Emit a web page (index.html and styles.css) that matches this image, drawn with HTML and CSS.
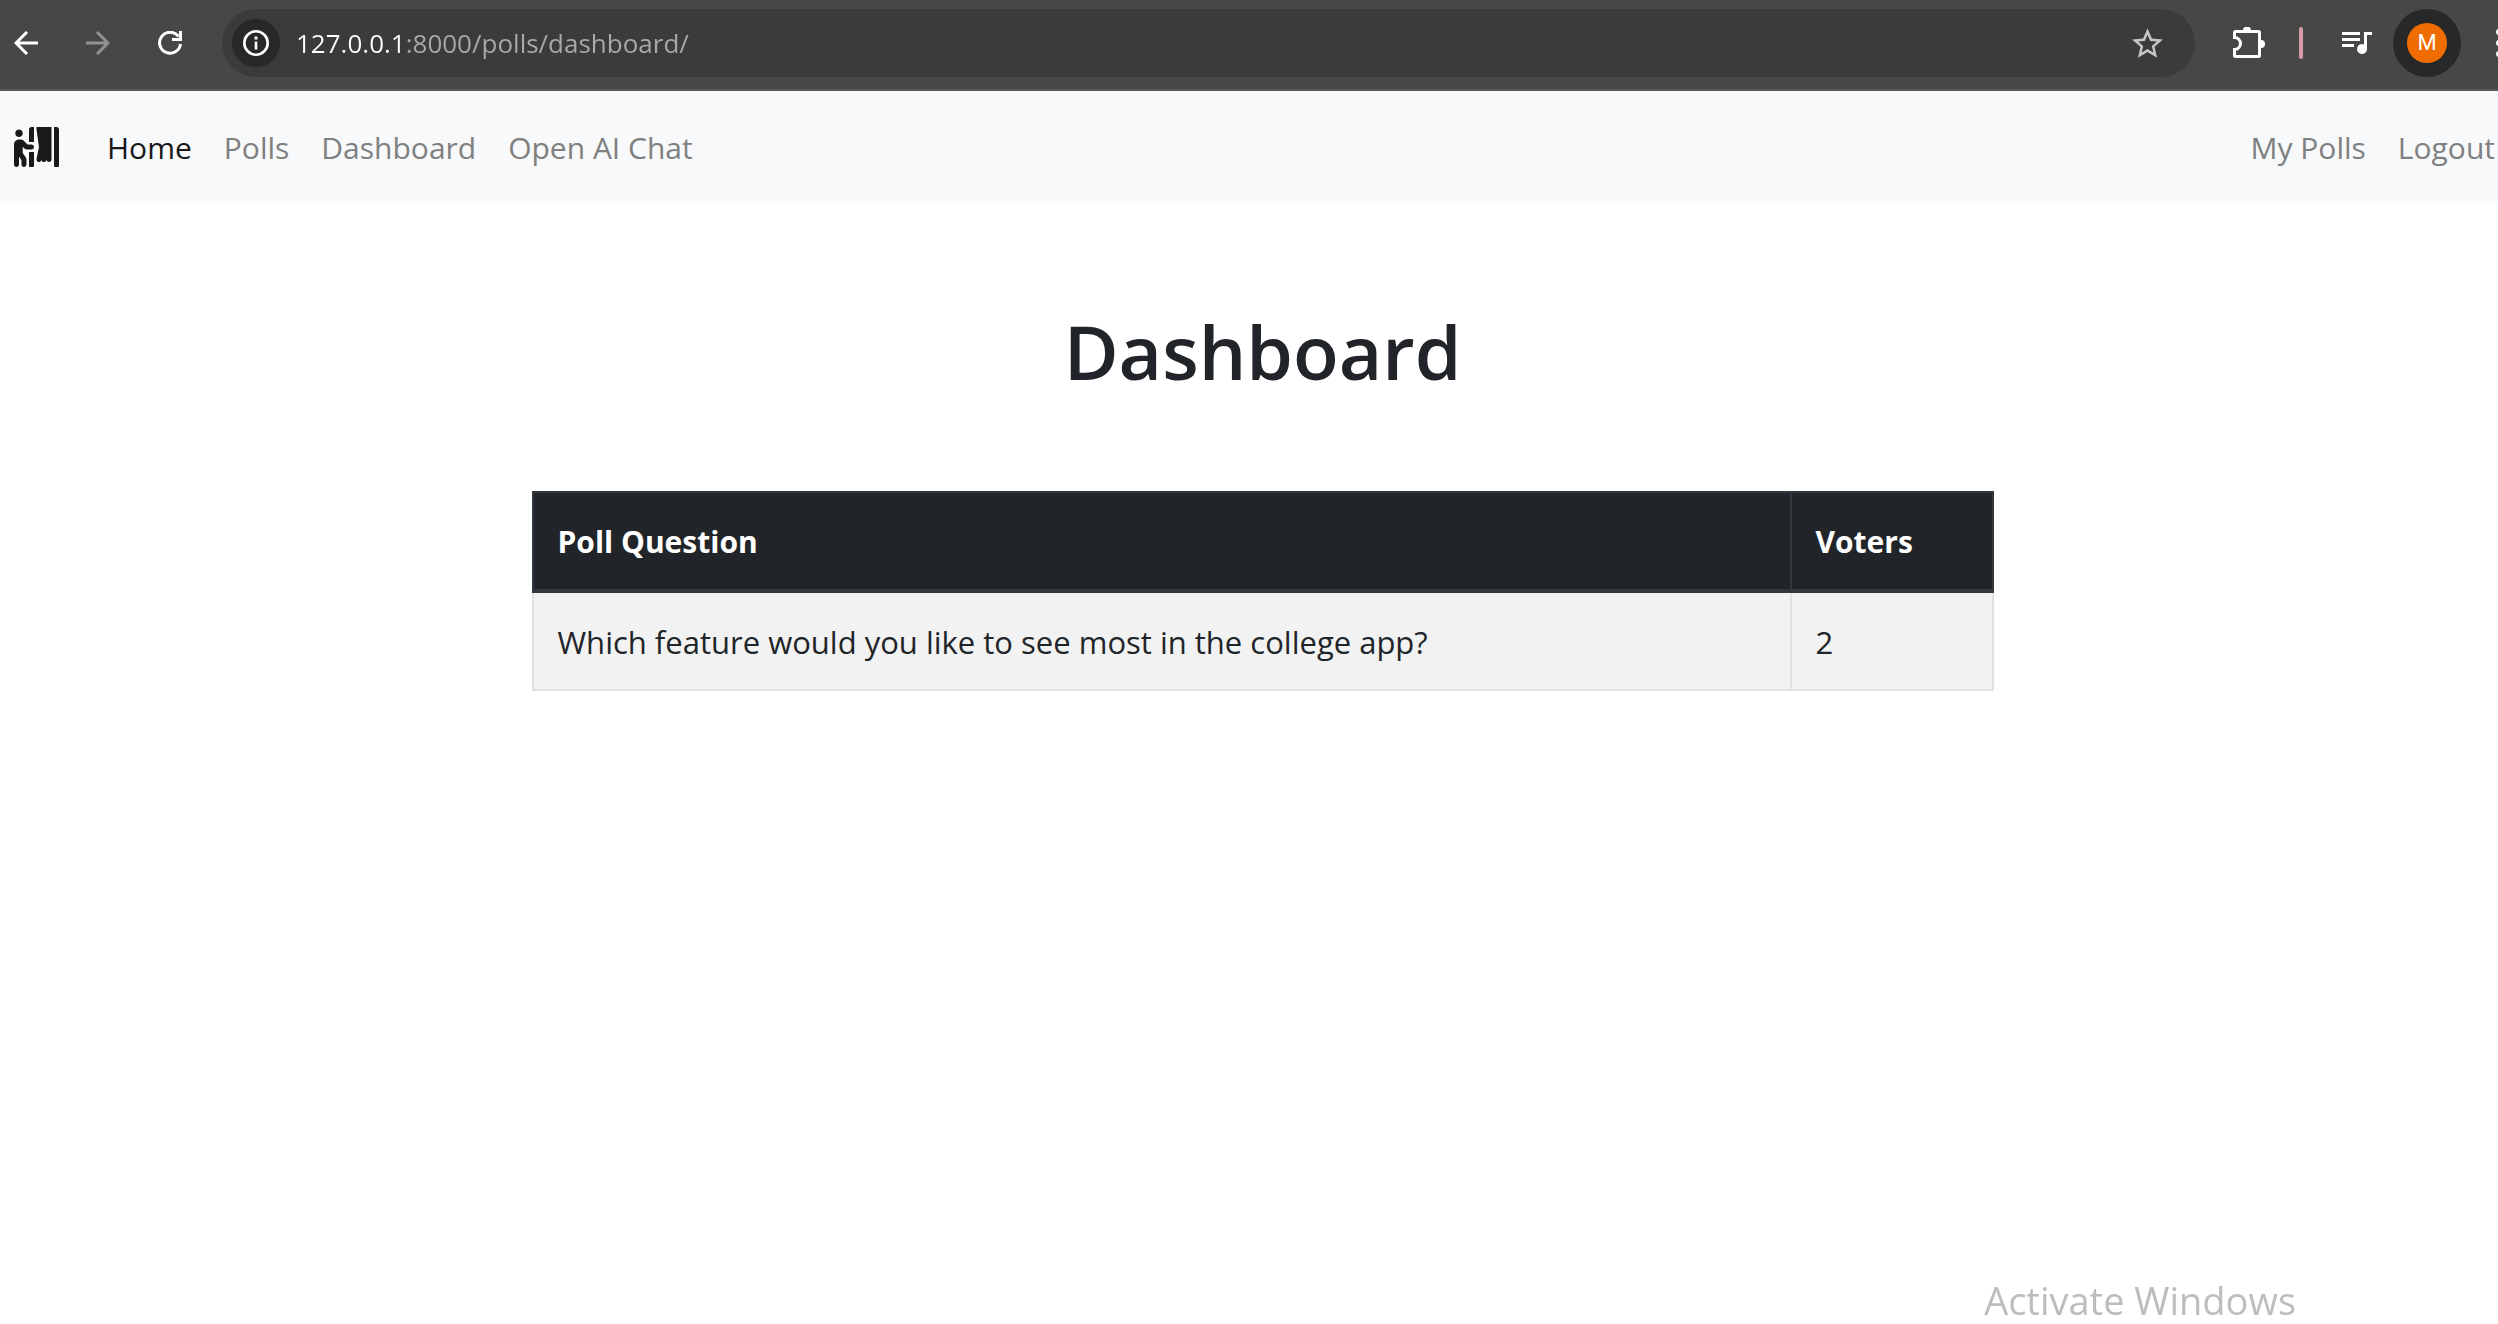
FILE: index.html
```html
<!DOCTYPE html>
<html lang="en">
<head>
<meta charset="utf-8">
<title>Dashboard</title>
<link rel="stylesheet" href="styles.css">
</head>
<body>
<div class="window">
  <header class="toolbar">
    <div class="history">
      <button class="tool" aria-label="Back">
        <svg width="24" height="24" viewBox="0 0 24 24" fill="none" stroke="#fff" stroke-width="3"><path d="M24 12H2M13 1 2 12l11 11"/></svg>
      </button>
      <button class="tool" aria-label="Forward" disabled>
        <svg width="24" height="24" viewBox="0 0 24 24" fill="none" stroke="#919191" stroke-width="3"><path d="M0 12h22M11 1l11 11-11 11"/></svg>
      </button>
      <button class="tool" aria-label="Reload">
        <svg width="24" height="24" viewBox="0 0 24 24" fill="none" stroke="#fff" stroke-width="3"><path d="M22.500 13A10.500 10.500 0 1 1 20.500 5.500M22.500 0v8.500H14"/></svg>
      </button>
    </div>
    <div class="address">
      <button class="site-info" aria-label="Site information">
        <svg width="26" height="26" viewBox="0 0 26 26"><circle cx="13" cy="13" r="11.700" fill="none" stroke="#fff" stroke-width="2.600"/><path d="M11.700 11.500h2.600v8h-2.600zM11.500 6.500h3v3h-3z" fill="#fff"/></svg>
      </button>
      <input class="url" type="text" aria-label="Address" value="127.0.0.1:8000/polls/dashboard/">
      <button class="tool" aria-label="Bookmark this page">
        <svg width="31" height="30" viewBox="2 2 20 19" fill="#c7c7c7"><path d="m22 9.240-7.190-.620L12 2 9.190 8.630 2 9.240l5.460 4.730L5.820 21 12 17.270 18.180 21l-1.630-7.030L22 9.240zM12 15.400l-3.760 2.270 1-4.280-3.320-2.880 4.380-.380L12 6.100l1.710 4.040 4.380.380-3.320 2.880 1 4.280L12 15.400z"/></svg>
      </button>
    </div>
    <div class="actions">
      <button class="tool" aria-label="Extensions">
        <svg width="32" height="32" viewBox="0 0 32 32"><path d="M2.500 4.500h23a1 1 0 0 1 1 1v23a1 1 0 0 1-1 1h-23a1 1 0 0 1-1-1v-6a6 6 0 0 0 0-12v-5a1 1 0 0 1 1-1z" fill="none" stroke="#fff" stroke-width="3"/><path d="M10 3.500a4 4 0 0 1 8 0zM28 13a4 4 0 0 1 0 8z" fill="#fff"/></svg>
      </button>
      <span class="divider"></span>
      <button class="tool" aria-label="Media controls">
        <svg width="32" height="24" viewBox="0 0 32 24" fill="#fff"><path d="M1 1h18v3H1zM1 7h18v3H1zM1 13h12v3H1zM23 1h8v3h-5v14a5 5 0 1 1-3-4.500z"/></svg>
      </button>
      <button class="profile" aria-label="Profile"><span class="avatar">M</span></button>
      <button class="tool" aria-label="Menu">
        <svg width="6" height="28" viewBox="0 0 6 28" fill="#fff"><circle cx="3" cy="3" r="3"/><circle cx="3" cy="14" r="3"/><circle cx="3" cy="25" r="3"/></svg>
      </button>
    </div>
  </header>

  <nav class="navbar">
    <a class="brand" href="#" aria-label="Polls app">
      <svg width="45" height="40" viewBox="0 0 576 512" fill="#18191a"><path d="M192 496c0 8.800 7.200 16 16 16h32c8.800 0 16-7.200 16-16V320h-64v176zm32-272h-50.900l-45.200-45.300C115.800 166.600 99.700 160 82.700 160H64c-17.100 0-33.200 6.700-45.300 18.800C6.700 190.900 0 207 0 224.100L.2 320 0 480c0 17.700 14.300 32 31.900 32 17.600 0 32-14.300 32-32l.1-100.700c.9.5 1.600 1.300 2.500 1.700l29.100 43v56c0 17.700 14.300 32 32 32s32-14.300 32-32v-56.500c0-9.900-2.300-19.800-6.700-28.600l-41.200-61.300V253l20.900 20.900c9.100 9.100 21.100 14.100 33.900 14.100H224c17.700 0 32-14.300 32-32s-14.300-32-32-32zM64 128c26.500 0 48-21.500 48-48S90.500 32 64 32 16 53.500 16 80s21.500 48 48 48zm224-96l31.500 223.100-30.900 154.600c-4.300 21.600 13 38.300 31.400 38.300 15.200 0 28-9.100 32.300-30.400.9 16.900 14.600 30.400 31.700 30.400 17.700 0 32-14.300 32-32 0 17.700 14.300 32 32 32s32-14.300 32-32V0H288v32zm-96 0v160h64V0h-32c-17.700 0-32 14.300-32 32zM544 0h-32v496c0 8.800 7.200 16 16 16h32c8.800 0 16-7.200 16-16V32c0-17.700-14.300-32-32-32z"/></svg>
    </a>
    <div class="links">
      <a class="link active" href="#">Home</a>
      <a class="link" href="#">Polls</a>
      <a class="link" href="#">Dashboard</a>
      <a class="link" href="#">Open AI Chat</a>
    </div>
    <div class="links account">
      <a class="link" href="#">My Polls</a>
      <a class="link" href="#">Logout</a>
    </div>
  </nav>

  <main class="container">
    <h1 class="title">Dashboard</h1>
    <table class="polls">
      <thead>
        <tr><th scope="col">Poll Question</th><th scope="col" class="voters">Voters</th></tr>
      </thead>
      <tbody>
        <tr><td>Which feature would you like to see most in the college app?</td><td>2</td></tr>
      </tbody>
    </table>
  </main>
</div>
<div class="watermark">Activate Windows</div>
</body>
</html>
```

FILE: styles.css
```css
* {
  box-sizing: border-box;
}

body {
  margin: 0;
  min-height: 100vh;
  overflow-x: hidden;
  background: #fff;
  color: #212529;
  font-family: "Segoe UI", "Open Sans", sans-serif;
  font-size: 30px;
  line-height: 48px;
}

button {
  display: flex;
  align-items: center;
  justify-content: center;
  flex: none;
  padding: 0;
  border: 0;
  background: none;
  font: inherit;
}

/* The window runs slightly past the right edge of the screen. */
.window {
  width: calc(100% + 27px);
}

.toolbar {
  display: flex;
  align-items: center;
  padding: 9px 2px 12px;
  border-bottom: 2px solid #595959;
  background: #474747;
}

.history {
  display: flex;
  gap: 24px;
}

.tool {
  width: 48px;
  height: 48px;
}

.address {
  display: flex;
  align-items: center;
  flex: 1;
  height: 68px;
  margin: 0 30px 0 28px;
  padding: 0 24px 0 10px;
  border-radius: 34px;
  background: #3b3b3b;
}

.site-info {
  width: 48px;
  height: 48px;
  border-radius: 50%;
  background: #282828;
}

/* The host is lighter than the port and path that follow it. */
.url {
  flex: 1;
  min-width: 0;
  height: 48px;
  margin-left: 16px;
  padding: 0;
  border: 0;
  outline: 0;
  background: linear-gradient(to right, #fff 107px, #a9a9a9 107px);
  background-clip: text;
  -webkit-text-fill-color: transparent;
  color: #a9a9a9;
  font-family: inherit;
  font-size: 26px;
}

.actions {
  display: flex;
  align-items: center;
}

.divider {
  width: 4px;
  height: 32px;
  margin: 0 30px 0 26px;
  border-radius: 2px;
  background: #d69ca5;
}

.profile {
  width: 68px;
  height: 68px;
  margin: 0 14px 0 12px;
  border-radius: 50%;
  background: #282828;
}

.avatar {
  width: 40px;
  height: 40px;
  border-radius: 50%;
  background: #ef6c00;
  color: #fff;
  font-family: Roboto, sans-serif;
  font-size: 22px;
  line-height: 40px;
}

.navbar {
  display: flex;
  align-items: center;
  padding: 32px 14px;
  background: #f8f9fa;
}

.brand {
  display: flex;
  margin-right: 32px;
}

.links {
  display: flex;
  padding-top: 2px;
  line-height: 46px;
}

.account {
  margin-left: auto;
}

.link {
  padding: 0 16px;
  color: #7f8080;
  text-decoration: none;
}

.link.active {
  color: #18191a;
}

.container {
  max-width: 1462px;
  margin: 0 auto;
  padding-top: 100px;
}

.title {
  margin: 0 0 92px;
  font-size: 75px;
  font-weight: 600;
  line-height: 96px;
  text-align: center;
}

.polls {
  width: 100%;
  border-collapse: collapse;
  text-align: left;
}

.polls th,
.polls td {
  padding: 25px 24px 23px;
  border: 2px solid #dee2e6;
}

.polls th {
  border-color: #32383e;
  border-bottom-width: 4px;
  background: #212529;
  color: #fff;
  font-weight: 700;
}

.polls td {
  background: #f2f2f2;
  font-size: 31px;
}

.voters {
  width: 202px;
}

.watermark {
  position: fixed;
  right: 202px;
  bottom: 0;
  color: #bdbdbd;
  font-size: 38px;
}
```
